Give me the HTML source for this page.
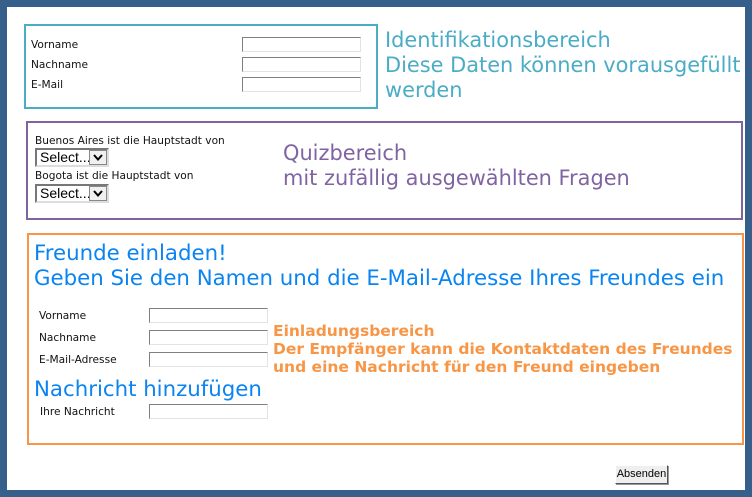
<!DOCTYPE html>
<html><head><meta charset="utf-8"><style>
*{margin:0;padding:0;box-sizing:border-box}
body{width:752px;height:497px;background:#365f8b;position:relative;overflow:hidden;font-family:"DejaVu Sans","Liberation Sans",sans-serif}
#pg{position:absolute;left:7px;top:7px;width:738px;height:483px;background:#fff}
.a{position:absolute;white-space:nowrap}
.box{position:absolute;border:2px solid}
.lbl{font-size:10.6px;color:#111;line-height:13px}
.in{position:absolute;border:1px solid #e3e3e3;border-top-color:#7f7f7f;border-left-color:#7f7f7f;background:#fff;height:15px}
.big{font-size:20.9px;line-height:25px}
.sel{position:absolute;width:74px;height:19px;border:2px solid #777;border-right-color:#ddd;border-bottom-color:#ddd;background:#fff;font-family:"Liberation Sans",sans-serif;font-size:14px;line-height:15px;padding-left:3px;color:#000}
.sel svg{position:absolute;right:0;top:0}
</style></head><body>
<div id="pg"></div>
<div class="box" style="left:24px;top:24px;width:354px;height:85px;border-color:#4bacc6"></div>
<div class="a lbl" style="left:31px;top:39px">Vorname</div>
<div class="a lbl" style="left:31px;top:59px">Nachname</div>
<div class="a lbl" style="left:31px;top:79px">E-Mail</div>
<div class="in" style="left:242px;top:37px;width:119px"></div>
<div class="in" style="left:242px;top:57px;width:119px"></div>
<div class="in" style="left:242px;top:77px;width:119px"></div>
<div class="a big" style="left:385px;top:28px;color:#4bacc6">Identifikationsbereich<br>Diese Daten können vorausgefüllt<br>werden</div>

<div class="box" style="left:26px;top:121px;width:717px;height:99px;border-color:#8064a2"></div>
<div class="a lbl" style="left:35px;top:135px">Buenos Aires ist die Hauptstadt von</div>
<div class="sel" style="left:35px;top:148px">Select...<svg width="18" height="15" viewBox="0 0 18 15"><rect x="0.5" y="0.5" width="17" height="14" fill="#f0f0f0" stroke="#888"/><path d="M5 5 L9 9.5 L13 5" fill="none" stroke="#000" stroke-width="2"/></svg></div>
<div class="a lbl" style="left:35px;top:170px">Bogota ist die Hauptstadt von</div>
<div class="sel" style="left:35px;top:184px">Select...<svg width="18" height="15" viewBox="0 0 18 15"><rect x="0.5" y="0.5" width="17" height="14" fill="#f0f0f0" stroke="#888"/><path d="M5 5 L9 9.5 L13 5" fill="none" stroke="#000" stroke-width="2"/></svg></div>
<div class="a big" style="left:283px;top:141px;color:#8064a2">Quizbereich<br>mit zufällig ausgewählten Fragen</div>

<div class="box" style="left:27px;top:233px;width:717px;height:212px;border-color:#f79646"></div>
<div class="a big" style="left:34px;top:241px;color:#0a84f0;font-size:21.3px">Freunde einladen!<br>Geben Sie den Namen und die E-Mail-Adresse Ihres Freundes ein</div>
<div class="a lbl" style="left:39px;top:310px">Vorname</div>
<div class="a lbl" style="left:39px;top:332px">Nachname</div>
<div class="a lbl" style="left:39px;top:354px">E-Mail-Adresse</div>
<div class="in" style="left:149px;top:308px;width:119px"></div>
<div class="in" style="left:149px;top:330px;width:119px"></div>
<div class="in" style="left:149px;top:352px;width:119px"></div>
<div class="a" style="left:273px;top:322px;color:#f79646;font-weight:bold;font-size:15.5px;line-height:18px">Einladungsbereich<br>Der Empfänger kann die Kontaktdaten des Freundes<br>und eine Nachricht für den Freund eingeben</div>
<div class="a big" style="left:34px;top:377px;color:#0a84f0;font-size:21.3px">Nachricht hinzufügen</div>
<div class="a lbl" style="left:40px;top:406px">Ihre Nachricht</div>
<div class="in" style="left:149px;top:404px;width:119px"></div>

<div class="a" style="left:615px;top:465px;width:53px;height:19px;background:#efefef;border:1px solid #fff;border-right-color:#555;border-bottom-color:#555;box-shadow:1px 1px 0 #999;font-family:'Liberation Sans',sans-serif;font-size:11px;line-height:16px;text-align:center;color:#000">Absenden</div>
</body></html>
